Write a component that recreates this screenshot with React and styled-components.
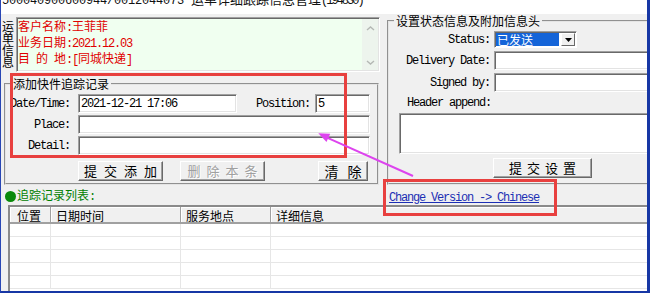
import React from 'react';
import styled, { createGlobalStyle } from 'styled-components';

const mono = `"Liberation Mono", "Courier New", monospace`;
const cjk = `"Noto Sans CJK SC", "Liberation Sans", sans-serif`;

const GlobalStyle = createGlobalStyle`
  html, body {
    margin: 0;
    padding: 0;
    background: #ffffff;
  }
  * {
    box-sizing: border-box;
  }
`;

const Window = styled.div`
  position: relative;
  width: 650px;
  height: 293px;
  border-left: 1px solid #2846b4;
  border-right: 3px solid #1737a5;
  border-bottom: 2px solid #1737a5;
  background: #f0f0f0;
  overflow: hidden;
  font-family: ${cjk};
  font-size: 12px;
  color: #000;
`;

const TitleStrip = styled.div`
  height: 14px;
  background: #ffffff;
  overflow: hidden;
`;

const TitleText = styled.div`
  margin-top: -8px;
  padding-left: 1px;
  font-size: 13px;
  line-height: 13px;
  white-space: nowrap;
  color: #111;
`;

const TitleLatin = styled.span`
  font-family: ${mono};
  font-size: 12px;
  letter-spacing: ${p => p.$tight ? -2 : -0.2}px;
`;

const Latin = styled.span`
  font-family: ${mono};
  font-size: 12px;
  letter-spacing: -1.2px;
`;

// ascii runs in the narrow mono face, the rest in the CJK face
const Mixed = ({ text }) =>
  text
    .split(/([\x20-\x7e]+)/)
    .filter(Boolean)
    .map((part, i) =>
      /[\x20-\x7e]/.test(part) ? <Latin key={i}>{part}</Latin> : <span key={i}>{part}</span>
    );

const Main = styled.div`
  display: flex;
  height: 171px;
`;

const LeftCol = styled.div`
  flex-shrink: 0;
  width: 382px;
  display: flex;
  flex-direction: column;
`;

const InfoRow = styled.div`
  display: flex;
  margin-top: 3px;
`;

const SideLabel = styled.div`
  width: 12px;
  margin: 3px 0 0 1px;
  font-size: 12px;
  line-height: 12px;
  word-break: break-all;
`;

const InfoBox = styled.div`
  display: flex;
  width: 364px;
  height: 55px;
  margin-left: 2px;
  background: #f0fff0;
  border: 1px solid;
  border-color: #a0a0a0 #ffffff #ffffff #a0a0a0;
  box-shadow: inset 1px 1px 0 #696969, inset -1px -1px 0 #e3e3e3;
`;

const InfoText = styled.div`
  flex: 1;
  padding: 1px 0 0 1px;
  color: #e00000;
  line-height: 13px;
  white-space: nowrap;
`;

const ScrollBar = styled.div`
  width: 16px;
  margin: 1px 1px 1px 0;
  display: flex;
  flex-direction: column;
  justify-content: space-between;
  align-items: center;
  padding: 7px 0 5px;
  background: #edf4ed;
`;

const Chevron = ({ down }) => (
  <svg width="9" height="5" viewBox="0 0 9 5">
    <polyline
      points={down ? '1,1 4.5,4 8,1' : '1,4 4.5,1 8,4'}
      fill="none"
      stroke="#b4b8b4"
      strokeWidth="1.4"
    />
  </svg>
);

const GroupBox = styled.fieldset`
  flex-shrink: 0;
  min-width: 0;
  margin: ${p => p.$top}px 0 0 ${p => p.$left}px;
  width: ${p => p.$width}px;
  padding: 0 ${p => p.$padRight}px ${p => p.$padBottom}px 0;
  border: 2px groove #e4e4e4;
`;

const Legend = styled.legend`
  margin-left: ${p => p.$indent}px;
  padding: 0 2px;
  font-size: 12px;
  line-height: 12px;
`;

const FieldGrid = styled.div`
  display: grid;
  grid-template-columns: ${p => p.$labelWidth}px 1fr;
  column-gap: ${p => p.$gap}px;
  row-gap: ${p => p.$rowGap}px;
  padding-top: 4px;
  align-items: center;
`;

const FieldLabel = styled.span`
  font-family: ${mono};
  font-size: 12px;
  letter-spacing: -1.2px;
  line-height: 12px;
  text-align: right;
  white-space: nowrap;
`;

const Field = styled.input`
  display: block;
  width: ${p => (p.$w ? `${p.$w}px` : '100%')};
  height: 19px;
  margin: 0;
  padding: 0 2px;
  border: 1px solid;
  border-color: #a0a0a0 #ffffff #ffffff #a0a0a0;
  box-shadow: inset 1px 1px 0 #696969, inset -1px -1px 0 #e3e3e3;
  background: #ffffff;
  font-family: ${mono};
  font-size: 12px;
  letter-spacing: -1.2px;
  color: #000;
  outline: none;
`;

const DateRow = styled.div`
  display: flex;
  align-items: center;
`;

const PosGroup = styled.div`
  display: flex;
  align-items: center;
  gap: 5px;
  margin-left: auto;
`;

const ButtonRow = styled.div`
  display: flex;
  align-items: center;
  margin-top: 6px;
  padding-left: 72px;
`;

const Button = styled.button`
  display: flex;
  align-items: center;
  justify-content: center;
  width: ${p => p.$w}px;
  height: 20px;
  margin: 0 ${p => p.$right || 0}px 0 ${p => (p.$auto ? 'auto' : `${p.$left || 0}px`)};
  padding: 0;
  border: 1px solid;
  border-color: #ffffff #696969 #696969 #ffffff;
  box-shadow: inset -1px -1px 0 #a0a0a0;
  background: #f0f0f0;
  font-family: ${cjk};
  font-size: ${p => p.$size || 13}px;
  line-height: 16px;
  color: #000;
  white-space: nowrap;

  &:disabled {
    color: #a0a0a0;
    text-shadow: 1px 1px 0 #ffffff;
  }
`;

const ButtonText = styled.span`
  letter-spacing: ${p => p.$spacing}px;
  margin-right: -${p => p.$spacing}px;
`;

const Select = styled.div`
  display: flex;
  width: 83px;
  height: 17px;
  padding: 1px;
  border: 1px solid;
  border-color: #a0a0a0 #ffffff #ffffff #a0a0a0;
  box-shadow: inset 1px 1px 0 #696969;
  background: #ffffff;
`;

const SelectValue = styled.div`
  flex: 1;
  padding-left: 1px;
  background: #1464d8;
  color: #ffffff;
  font-size: 12px;
  line-height: 13px;
`;

const DropButton = styled.div`
  width: 14px;
  margin-left: 2px;
  display: flex;
  align-items: center;
  justify-content: center;
  border: 1px solid;
  border-color: #ffffff #696969 #696969 #ffffff;
  background: #f0f0f0;
`;

const HeaderLabel = styled.div`
  margin: 5px 0 0 18px;
  font-family: ${mono};
  font-size: 12px;
  letter-spacing: -1.2px;
  line-height: 13px;
`;

const TextArea = styled.textarea`
  display: block;
  width: 260px;
  height: 41px;
  margin: 3px 0 0 10px;
  border: 1px solid;
  border-color: #a0a0a0 #ffffff #ffffff #a0a0a0;
  box-shadow: inset 1px 1px 0 #696969, inset -1px -1px 0 #e3e3e3;
  background: #ffffff;
  resize: none;
  outline: none;
`;

const SubmitRow = styled.div`
  margin-top: 4px;
  padding-left: 104px;
`;

const BottomBar = styled.div`
  display: grid;
  grid-template-columns: 382px 1fr;
  align-items: center;
  height: 19px;
  padding-top: 2px;
`;

const ListTitle = styled.div`
  display: flex;
  align-items: center;
  gap: 1px;
  padding-left: 4px;
  color: #008000;
  line-height: 13px;
`;

const Dot = styled.span`
  width: 11px;
  height: 11px;
  border-radius: 50%;
  background: #0a8a0a;
`;

const VersionLink = styled.a`
  margin-left: 6px;
  font-family: ${mono};
  font-size: 12px;
  letter-spacing: -1.2px;
  line-height: 13px;
  color: #1c2fb4;
  text-decoration: underline;
`;

const Table = styled.div`
  width: 660px;
  height: 100px;
  margin: 1px 0 0 7px;
  border-style: solid;
  border-width: 2px;
  border-color: #8a8a8a #ffffff #ffffff #8a8a8a;
  background: #ffffff;
`;

const columns = '41px 130px 90px 1fr';

const HeadRow = styled.div`
  display: grid;
  grid-template-columns: ${columns};
`;

const HeadCell = styled.div`
  height: 17px;
  padding: 2px 0 0 ${p => p.$pad || 6}px;
  border-right: 1px solid #a0a0a0;
  border-bottom: 2px solid #a0a0a0;
  box-shadow: inset 1px 1px 0 #ffffff;
  background: #f0f0f0;
  line-height: 13px;
  white-space: nowrap;
`;

const BodyRow = styled.div`
  display: grid;
  grid-template-columns: ${columns};
  height: 13px;
  border-bottom: 1px solid #e6e6e6;

  &:first-child {
    height: 15px;
  }
`;

const BodyCell = styled.div`
  border-right: 1px solid #e6e6e6;
`;

const RedBox = styled.div`
  position: absolute;
  left: ${p => p.$x}px;
  top: ${p => p.$y}px;
  width: ${p => p.$w}px;
  height: ${p => p.$h}px;
  border: 3px solid #e8403f;
  pointer-events: none;
`;

const Overlay = styled.svg`
  position: absolute;
  left: 0;
  top: 0;
  pointer-events: none;
`;

const headers = ['位置', '日期时间', '服务地点', '详细信息'];

const App = () => (
  <>
    <GlobalStyle />
    <Window>
      <TitleStrip>
        <TitleText>
          <TitleLatin>500040900600944/0012044073 </TitleLatin>
          运单详细跟踪信息管理
          <TitleLatin $tight>(194830)</TitleLatin>
        </TitleText>
      </TitleStrip>

      <Main>
        <LeftCol>
          <InfoRow>
            <SideLabel>运单信息</SideLabel>
            <InfoBox>
              <InfoText>
                <div><Mixed text="客户名称:王菲菲" /></div>
                <div><Mixed text="业务日期:2021.12.03" /></div>
                <div><Mixed text="目 的 地:[同城快递]" /></div>
              </InfoText>
              <ScrollBar>
                <Chevron />
                <Chevron down />
              </ScrollBar>
            </InfoBox>
          </InfoRow>

          <GroupBox $top={6} $left={3} $width={375} $padRight={7} $padBottom={2}>
            <Legend $indent={5}>添加快件追踪记录</Legend>
            <FieldGrid $labelWidth={64} $gap={8} $rowGap={2}>
              <FieldLabel>Date/Time:</FieldLabel>
              <DateRow>
                <Field $w={159} readOnly value="2021-12-21 17:06" />
                <PosGroup>
                  <FieldLabel>Position:</FieldLabel>
                  <Field $w={55} readOnly value="5" />
                </PosGroup>
              </DateRow>
              <FieldLabel>Place:</FieldLabel>
              <Field readOnly value="" />
              <FieldLabel>Detail:</FieldLabel>
              <Field readOnly value="" />
            </FieldGrid>
            <ButtonRow>
              <Button $w={85}><ButtonText $spacing={7}>提交添加</ButtonText></Button>
              <Button $w={85} $left={17} disabled><ButtonText $spacing={6}>删除本条</ButtonText></Button>
              <Button $w={50} $auto $right={2} $size={14}><ButtonText $spacing={9}>清除</ButtonText></Button>
            </ButtonRow>
          </GroupBox>
        </LeftCol>

        <GroupBox $top={1} $left={4} $width={280} $padRight={0} $padBottom={5}>
          <Legend $indent={5}>设置状态信息及附加信息头</Legend>
          <FieldGrid $labelWidth={101} $gap={4} $rowGap={3}>
            <FieldLabel>Status:</FieldLabel>
            <Select>
              <SelectValue>已发送</SelectValue>
              <DropButton>
                <svg width="7" height="4" viewBox="0 0 7 4">
                  <polygon points="0,0 7,0 3.5,4" fill="#000" />
                </svg>
              </DropButton>
            </Select>
            <FieldLabel>Delivery Date:</FieldLabel>
            <Field readOnly value="" />
            <FieldLabel>Signed by:</FieldLabel>
            <Field readOnly value="" />
          </FieldGrid>
          <HeaderLabel>Header append:</HeaderLabel>
          <TextArea readOnly value="" />
          <SubmitRow>
            <Button $w={99}><ButtonText $spacing={5}>提交设置</ButtonText></Button>
          </SubmitRow>
        </GroupBox>
      </Main>

      <BottomBar>
        <ListTitle>
          <Dot />
          <span><Mixed text="追踪记录列表:" /></span>
        </ListTitle>
        <div>
          <VersionLink>Change Version -&gt; Chinese</VersionLink>
        </div>
      </BottomBar>

      <Table>
        <HeadRow>
          {headers.map((h, i) => (
            <HeadCell key={h} $pad={i === 0 ? 7 : 5}>{h}</HeadCell>
          ))}
        </HeadRow>
        {[0, 1, 2, 3, 4].map(r => (
          <BodyRow key={r}>
            <BodyCell />
            <BodyCell />
            <BodyCell />
            <BodyCell />
          </BodyRow>
        ))}
      </Table>

      <RedBox $x={9} $y={73} $w={337} $h={85} />
      <RedBox $x={382} $y={179} $w={174} $h={37} />
      <Overlay width="646" height="291" viewBox="0 0 646 291">
        <line x1="412" y1="176" x2="326" y2="137.6" stroke="#dd44ee" strokeWidth="2" />
        <polygon points="317.3,133.3 325.5,141.9 329.2,133.7" fill="#dd44ee" />
      </Overlay>
    </Window>
  </>
);

export default App;
